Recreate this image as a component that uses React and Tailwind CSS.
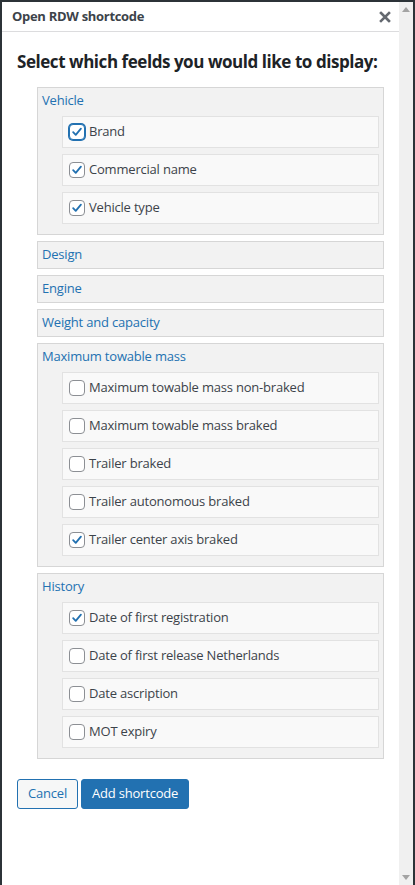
import React from 'react';

const groups = [
  {
    title: 'Vehicle',
    items: [
      { label: 'Brand', checked: true, focus: true },
      { label: 'Commercial name', checked: true },
      { label: 'Vehicle type', checked: true },
    ],
  },
  { title: 'Design', items: [] },
  { title: 'Engine', items: [] },
  { title: 'Weight and capacity', items: [] },
  {
    title: 'Maximum towable mass',
    items: [
      { label: 'Maximum towable mass non-braked' },
      { label: 'Maximum towable mass braked' },
      { label: 'Trailer braked' },
      { label: 'Trailer autonomous braked' },
      { label: 'Trailer center axis braked', checked: true },
    ],
  },
  {
    title: 'History',
    items: [
      { label: 'Date of first registration', checked: true },
      { label: 'Date of first release Netherlands' },
      { label: 'Date ascription' },
      { label: 'MOT expiry' },
    ],
  },
];

const Checkbox = ({ checked, focus }) => (
  <span
    className={
      'flex h-4 w-4 shrink-0 items-center justify-center rounded-[4px] border bg-white ' +
      (focus ? 'border-[#2271b1] shadow-[0_0_0_1px_#2271b1]' : 'border-[#8c8f94]')
    }
  >
    {checked && (
      <svg width="14" height="14" viewBox="0 0 20 20">
        <path d="M4.5 10.2 L8.2 14 L15.6 5.2" fill="none" stroke="#2271b1" strokeWidth="2.6" strokeLinecap="round" strokeLinejoin="round" />
      </svg>
    )}
  </span>
);

const Group = ({ title, items }) => (
  <div className={'border border-[#d6d6d6] bg-[#f2f2f2] ' + (items.length ? 'pb-[10px]' : '')}>
    <div className="flex h-[26px] items-center px-1 text-[13px] tracking-[-0.2px] text-[#2271b1]">{title}</div>
    {items.length > 0 && (
      <div className="flex flex-col gap-[6px] pl-6 pr-1 pt-[2px]">
        {items.map((it) => (
          <label
            key={it.label}
            className="flex h-[32px] items-center gap-1 border border-[#e2e2e2] bg-[#f9f9f9] px-[6px] text-[13px] tracking-[-0.2px] text-[#3c434a]"
          >
            <Checkbox checked={it.checked} focus={it.focus} />
            <span>{it.label}</span>
          </label>
        ))}
      </div>
    )}
  </div>
);

export default function App() {
  return (
    <div
      className="flex h-[885px] bg-[#2c3338] pl-[2px] pr-[2px] pt-[2px]"
      style={{ fontFamily: '"Open Sans", "Noto Sans", sans-serif' }}
    >
      <div className="flex min-w-0 flex-1 flex-col bg-white">
        <div className="flex h-[30px] items-center justify-between border-b border-[#dcdcde] pl-[10px] pr-[8px]">
          <span className="text-[13px] font-bold tracking-[-0.3px] text-[#3c434a]">Open RDW shortcode</span>
          <svg width="12" height="12" viewBox="0 0 12 12">
            <path d="M2 2 L10 10 M10 2 L2 10" stroke="#646970" strokeWidth="2.6" strokeLinecap="square" />
          </svg>
        </div>
        <div className="px-[15px] pt-[16px]">
          <h2 className="whitespace-nowrap text-[17px] font-bold leading-[28px] tracking-[-0.45px] text-[#1d2327]">
            Select which feelds you would like to display:
          </h2>
          <div className="mt-[11px] flex flex-col gap-[6px] pl-5">
            {groups.map((g) => (
              <Group key={g.title} {...g} />
            ))}
          </div>
          <div className="mt-[20px] flex gap-[3px]">
            <button className="h-[30px] rounded-[3px] border border-[#2271b1] bg-[#f6f7f7] px-[10px] text-[13px] tracking-[-0.2px] text-[#2271b1]">
              Cancel
            </button>
            <button className="h-[30px] rounded-[3px] border border-[#2271b1] bg-[#2271b1] px-[10px] text-[13px] tracking-[-0.2px] text-white">
              Add shortcode
            </button>
          </div>
        </div>
      </div>
      <div className="flex w-[14px] flex-col items-center justify-between bg-[#f0f0f0] py-[5px]">
        <svg width="8" height="5" viewBox="0 0 8 5">
          <path d="M0 5 L4 0 L8 5 Z" fill="#a3a3a3" />
        </svg>
        <svg width="8" height="5" viewBox="0 0 8 5">
          <path d="M0 0 L4 5 L8 0 Z" fill="#a3a3a3" />
        </svg>
      </div>
    </div>
  );
}
